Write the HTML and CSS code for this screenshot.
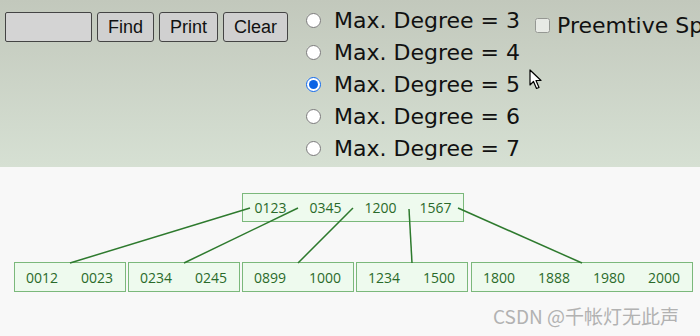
FILE: index.html
```html
<!DOCTYPE html>
<html>
<head lang="en">
    <meta charset="UTF-8">
    <title>B-Tree</title>
    <link rel="stylesheet" href="styles.css">
</head>
<body>
    <div id="panel">
        <div id="search">
            <input type="text" id="key" value=""/>
            <button>Find</button>
            <button>Print</button>
            <button>Clear</button>
        </div>
        <ul id="degrees">
            <li><input type="radio" name="deg"/><span>Max. Degree = 3</span></li>
            <li><input type="radio" name="deg"/><span>Max. Degree = 4</span></li>
            <li><input type="radio" name="deg" checked/><span>Max. Degree = 5</span></li>
            <li><input type="radio" name="deg"/><span>Max. Degree = 6</span></li>
            <li><input type="radio" name="deg"/><span>Max. Degree = 7</span></li>
        </ul>
        <div id="preempt">
            <input type="checkbox"/><span>Preemtive Split / Merge (Even max degree only)</span>
        </div>
        <svg id="cursor" width="14" height="22" viewBox="0 0 14 22">
            <path d="M1 1 L1 16 L4.5 12.5 L7.5 19.5 L10 18.5 L7 11.5 L12 11.5 Z" fill="#fff" stroke="#000" stroke-width="1.2" stroke-linejoin="round"/>
        </svg>
    </div>

    <div id="tree">
        <div class="level">
            <div class="node wide">
                <span>0123</span><span>0345</span><span>1200</span><span>1567</span>
            </div>
        </div>
        <div class="level leaves">
            <div class="node"><span>0012</span><span>0023</span></div>
            <div class="node"><span>0234</span><span>0245</span></div>
            <div class="node"><span>0899</span><span>1000</span></div>
            <div class="node"><span>1234</span><span>1500</span></div>
            <div class="node wide"><span>1800</span><span>1888</span><span>1980</span><span>2000</span></div>
        </div>
        <svg id="edges" width="700" height="169">
            <line x1="250" y1="41" x2="70" y2="96"/>
            <line x1="298" y1="41" x2="184" y2="96"/>
            <line x1="353" y1="41" x2="298" y2="96"/>
            <line x1="409" y1="42" x2="412" y2="96"/>
            <line x1="458" y1="41" x2="582" y2="96"/>
        </svg>
        <div id="mark">CSDN @千帐灯无此声</div>
    </div>
</body>
</html>
```

FILE: styles.css
```css
* {
    margin: 0;
    padding: 0;
    box-sizing: border-box;
}
body {
    width: 700px;
    height: 336px;
    overflow: hidden;
    background: #f8f8f8;
}
ul {
    list-style: none;
}

#panel {
    position: relative;
    height: 167px;
    display: flex;
    background: linear-gradient(to bottom, #c2c8bc, #d6e0d3);
    font-family: "DejaVu Sans", Verdana, sans-serif;
    color: #111;
    overflow: hidden;
    white-space: nowrap;
}
#panel > * {
    flex-shrink: 0;
}

#search {
    display: flex;
    gap: 5px;
    padding: 12px 0 0 5px;
    height: 42px;
}
#search input {
    width: 87px;
    height: 30px;
    background: #d4d4d4;
    border: 1px solid #444;
    border-radius: 2px;
}
#search button {
    height: 30px;
    padding: 0 10px;
    font-family: "Liberation Sans", Arial, sans-serif;
    font-size: 18px;
    color: #111;
    background: #d0d0d0;
    border: 1px solid #444;
    border-radius: 3px;
}

#degrees {
    margin-left: 18px;
    padding-top: 4px;
}
#degrees li {
    display: flex;
    align-items: center;
    height: 32px;
    font-size: 22px;
}
#degrees input {
    width: 15px;
    height: 15px;
    margin: 0 13px 0 0;
    accent-color: #0b63e5;
}

#preempt {
    display: flex;
    align-items: center;
    margin: 9px 0 0 15px;
    height: 32px;
    font-size: 22px;
}
#preempt input {
    width: 15px;
    height: 15px;
    margin: 0 7px 0 0;
    opacity: 0.6;
}

#cursor {
    position: absolute;
    left: 529px;
    top: 69px;
}

#tree {
    position: relative;
    height: 169px;
    padding: 26px 0 0 6px;
    font-family: "Open Sans", "Noto Sans", sans-serif;
    font-size: 14px;
    color: #2a6a2a;
}
.level {
    display: flex;
    justify-content: center;
    gap: 2px;
}
.leaves {
    margin-top: 40px;
}
.node {
    display: flex;
    width: 112px;
    height: 30px;
    background: #eefaee;
    border: 1px solid #7bb87b;
}
.node.wide {
    width: 222px;
}
.level:first-child .node {
    height: 29px;
}
.node span {
    flex: 1;
    display: flex;
    align-items: center;
    justify-content: center;
}
.leaves .node:last-child {
    margin-left: 1px;
}

#edges {
    position: absolute;
    left: 0;
    top: 0;
}
#edges line {
    stroke: #2e7a2e;
    stroke-width: 1.5;
}

#mark {
    position: absolute;
    left: 493px;
    top: 135px;
    font-family: "Noto Sans CJK SC", sans-serif;
    font-size: 19px;
    color: #b2b2b2;
    white-space: nowrap;
}
```
